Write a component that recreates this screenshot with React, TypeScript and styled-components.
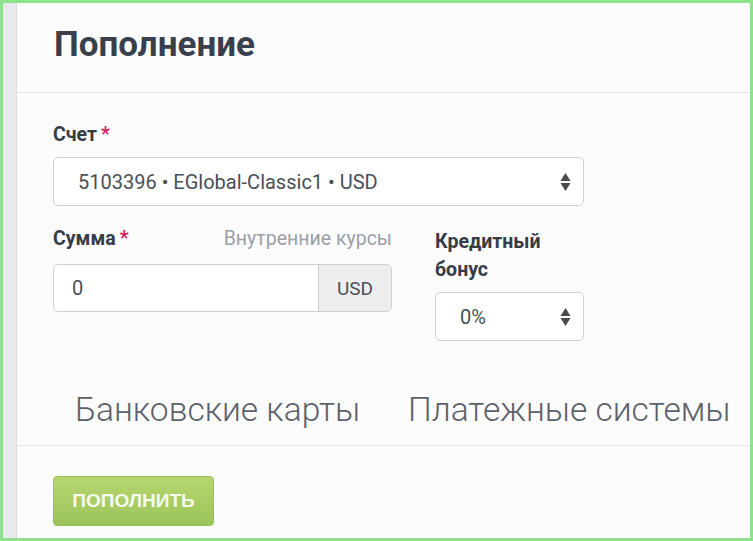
import React from "react"
import styled, { createGlobalStyle } from "styled-components"

const GlobalStyle = createGlobalStyle`
  html, body {
    margin: 0;
    padding: 0;
    background: #ffffff;
  }
  * {
    box-sizing: border-box;
  }
`

const Frame = styled.div`
  display: flex;
  width: 753px;
  height: 541px;
  border: 3px solid #8ee38a;
  overflow: hidden;
`

const Strip = styled.div`
  width: 13px;
  flex: none;
  background: #e9eaee;
`

const Card = styled.div`
  flex: 1;
  display: flex;
  flex-direction: column;
  background: #fcfcfd;
  border-left: 1px solid #dcdde2;
  font-family: Roboto, "Noto Sans", sans-serif;
  color: #363c46;
`

const Header = styled.div`
  height: 90px;
  padding: 22px 0 0 37px;
  border-bottom: 1px solid #e6e6e9;
`

const Title = styled.h1`
  margin: 0;
  font-size: 35px;
  font-weight: 700;
  line-height: 40px;
  color: #39404b;
`

const Body = styled.div`
  padding: 30px 0 0 36px;
`

const Label = styled.label`
  display: block;
  font-size: 19.5px;
  font-weight: 700;
  line-height: 24px;
  color: #363c46;
`

const Star = styled.span`
  color: #d1245c;
  margin-left: 4px;
  font-weight: 700;
`

const Field = styled.div`
  margin-bottom: 21px;
`

const LabelRow = styled.div<{ $gap: number }>`
  display: flex;
  justify-content: space-between;
  align-items: baseline;
  margin-bottom: ${(p) => p.$gap}px;
`

const Hint = styled.span`
  font-size: 19.5px;
  color: #9aa0a8;
`

const SelectBox = styled.div<{ $width: number; $pad: number }>`
  position: relative;
  display: flex;
  align-items: center;
  width: ${(p) => p.$width}px;
  height: 49px;
  padding-left: ${(p) => p.$pad}px;
  border: 1px solid #cfd0d3;
  border-radius: 5px;
  background: #fff;
  font-size: 20px;
  color: #4a4f58;
`

const Arrows = styled.svg`
  position: absolute;
  right: 12px;
  top: 50%;
  transform: translateY(-50%);
`

const Grid = styled.div`
  display: grid;
  grid-template-columns: 339px 149px;
  column-gap: 43px;
`

const InputGroup = styled.div`
  display: flex;
  height: 48px;
  border: 1px solid #cfd0d3;
  border-radius: 5px;
  overflow: hidden;
  background: #fff;
`

const Input = styled.div`
  flex: 1;
  display: flex;
  align-items: center;
  padding-left: 18px;
  font-size: 20px;
  color: #4a4f58;
`

const Addon = styled.div`
  width: 73px;
  display: flex;
  align-items: center;
  justify-content: center;
  background: #eeeeee;
  border-left: 1px solid #cfd0d3;
  font-size: 19px;
  color: #4a4f58;
`

const BonusLabel = styled(Label)`
  margin-top: 1px;
  margin-bottom: 8px;
  width: 130px;
  line-height: 28px;
`

const Tabs = styled.div`
  display: flex;
  gap: 48px;
  padding: 49px 0 15px 58px;
  border-bottom: 1px solid #e6e6e9;
`

const Tab = styled.div`
  font-size: 33.5px;
  font-weight: 300;
  line-height: 40px;
  color: #5b6169;
  white-space: nowrap;
`

const Footer = styled.div`
  padding: 30px 0 0 36px;
`

const Button = styled.button`
  width: 161px;
  height: 50px;
  border: 1px solid #98bf58;
  border-radius: 4px;
  background: linear-gradient(#b6d670, #9bc45a);
  color: #f6f9ef;
  font-family: "Liberation Sans", Arial, sans-serif;
  font-size: 19px;
  font-weight: 700;
  text-transform: uppercase;
`

const SelectArrows: React.FC = () => (
  <Arrows width="11" height="20" viewBox="0 0 11 20">
    <path d="M5.5 1 L10.5 9 L0.5 9 Z" fill="#4a4a4a" />
    <path d="M0.5 11 L10.5 11 L5.5 19 Z" fill="#4a4a4a" />
  </Arrows>
)

const App: React.FC = () => (
  <>
    <GlobalStyle />
    <Frame>
      <Strip />
      <Card>
        <Header>
          <Title>Пополнение</Title>
        </Header>
        <Body>
          <Field>
            <LabelRow $gap={10}>
              <Label>
                Счет<Star>*</Star>
              </Label>
            </LabelRow>
            <SelectBox $width={531} $pad={24}>
              5103396 • EGlobal-Classic1 • USD
              <SelectArrows />
            </SelectBox>
          </Field>
          <Grid>
            <div>
              <LabelRow $gap={13}>
                <Label>
                  Сумма<Star>*</Star>
                </Label>
                <Hint>Внутренние курсы</Hint>
              </LabelRow>
              <InputGroup>
                <Input>0</Input>
                <Addon>USD</Addon>
              </InputGroup>
            </div>
            <div>
              <BonusLabel>Кредитный бонус</BonusLabel>
              <SelectBox $width={149} $pad={24}>
                0%
                <SelectArrows />
              </SelectBox>
            </div>
          </Grid>
        </Body>
        <Tabs>
          <Tab>Банковские карты</Tab>
          <Tab>Платежные системы</Tab>
        </Tabs>
        <Footer>
          <Button>Пополнить</Button>
        </Footer>
      </Card>
    </Frame>
  </>
)

export default App
